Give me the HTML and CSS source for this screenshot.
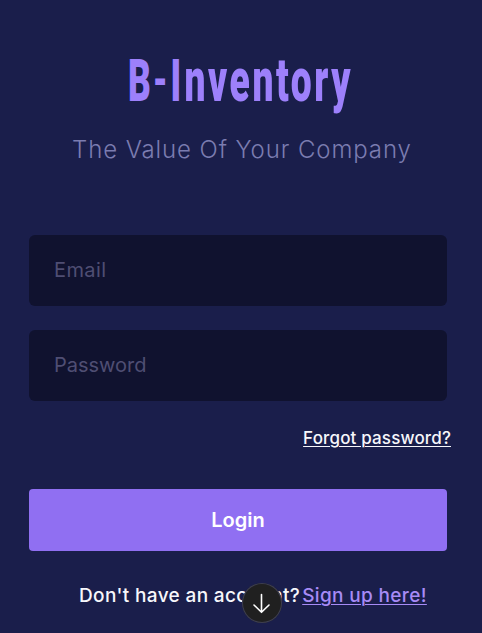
FILE: index.html
```html
<!DOCTYPE html>
<html lang="en">
<head>
<meta charset="utf-8">
<title>B-Inventory</title>
<link rel="stylesheet" href="styles.css">
</head>
<body>
<main class="page">
  <h1 class="brand">
    <svg width="226" height="60" viewBox="0 0 226 60" role="img" aria-label="B-Inventory">
      <text transform="translate(0 49) scale(.6 1)"><tspan x="0">B</tspan><tspan class="dash" x="42" dy="-1">-</tspan><tspan x="71" dy="1">I</tspan><tspan class="lower" x="94" textLength="277" lengthAdjust="spacing">nventory</tspan></text>
    </svg>
  </h1>
  <p class="tagline">The Value Of Your Company</p>
  <form class="form">
    <input class="field email" type="text" placeholder="Email" aria-label="Email">
    <input class="field password" type="password" placeholder="Password" aria-label="Password">
    <a class="forgot" href="#">Forgot password?</a>
    <button class="login" type="button">Login</button>
  </form>
  <p class="signup"><span class="question">Don't have an account?</span><a class="join" href="#">Sign up here!</a></p>
  <div class="scroll">
    <svg width="40" height="40" viewBox="0 0 40 40" fill="none" stroke="#fff" stroke-width="1.6" stroke-linecap="round" stroke-linejoin="round"><path d="M19.5 11.5V29M12 22l7.5 7.3L27 22"/></svg>
  </div>
</main>
</body>
</html>
```
FILE: styles.css
```css
* { box-sizing: border-box; }
body {
  margin: 0;
  background: #1a1e4b;
  font-family: Inter, "Open Sans", sans-serif;
  color: #f7f7fb;
}
.page {
  position: relative;
  height: 633px;
  overflow: hidden;
  padding-top: 52px;
}
.brand { margin: 0 0 0 128px; height: 60px; }
.brand svg { display: block; overflow: visible; }
.brand text {
  font: 900 59px Roboto, sans-serif;
  fill: #9d80fb;
}
.brand .lower { font-size: 62px; font-weight: 900; }
.brand .dash { font-weight: 700; }
.tagline {
  margin: 20px 0 0 72px;
  font-size: 24px;
  line-height: 36px;
  font-weight: 300;
  letter-spacing: 0.9px;
  color: #7b7cb0;
  white-space: nowrap;
}
.form {
  display: flex;
  flex-direction: column;
  margin: 67px 35px 0 29px;
}
.field {
  height: 71px;
  margin: 0 0 24px;
  padding: 0 25px 1px;
  border: 0;
  border-radius: 6px;
  background: #10122f;
  font: 400 20px Inter, sans-serif;
}
.email { letter-spacing: 0.4px; }
.field::placeholder { color: #4f4e73; opacity: 1; }
.forgot {
  align-self: flex-end;
  margin: 0 -4px 0 0;
  font-size: 17px;
  line-height: 26px;
  font-weight: 500;
  letter-spacing: 0.15px;
  color: #f7f7fb;
  text-underline-offset: 2px;
  text-decoration-thickness: 1px;
  white-space: nowrap;
}
.login {
  height: 62px;
  margin-top: 38px;
  border: 0;
  border-radius: 4px;
  background: #906ff2;
  color: #fff;
  font: 600 20px Inter, sans-serif;
}
.signup {
  display: flex;
  gap: 2px;
  margin: 31px 0 0 79px;
  font-size: 19px;
  line-height: 28px;
  font-weight: 500;
  letter-spacing: 0.35px;
  white-space: nowrap;
}
.join {
  color: #a78bf6;
  text-underline-offset: 2px;
  text-decoration-thickness: 1px;
}
.scroll {
  position: absolute;
  left: 242px;
  top: 583px;
  width: 40px;
  height: 40px;
  border-radius: 50%;
  background: #202020;
  box-shadow: inset 0 0 0 1px #3d3e50;
}
.scroll svg { display: block; }
```
